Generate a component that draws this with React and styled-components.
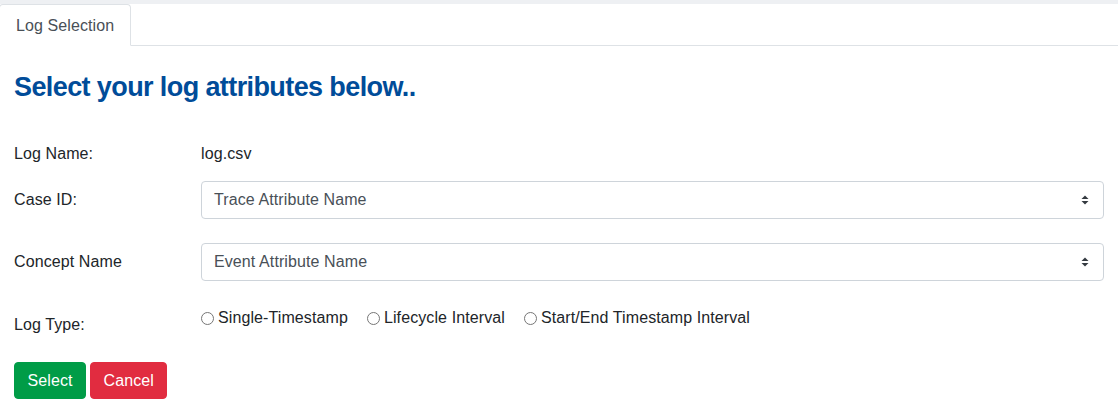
import React, { useState } from 'react';
import styled, { createGlobalStyle } from 'styled-components';

const GlobalStyle = createGlobalStyle`
  body {
    margin: 0;
    background: #fff;
    font-family: "Liberation Sans", Arial, Helvetica, sans-serif;
    font-size: 16px;
    line-height: 24px;
    letter-spacing: 0.1px;
    color: #212529;
  }
`;

const TopStrip = styled.div`
  height: 4px;
  background: #eef0f3;
`;

const TabList = styled.ul`
  display: flex;
  margin: 0;
  padding: 0;
  list-style: none;
  border-bottom: 1px solid #dee2e6;
`;

const Tab = styled.li`
  margin: 0 0 -1px -1px;
  padding: 9px 16px 7px;
  border: 1px solid #dee2e6;
  border-bottom-color: #fff;
  border-radius: 4px 4px 0 0;
  background: #fff;
  color: #495057;
`;

const Content = styled.div`
  padding: 0 14px;
`;

const Heading = styled.h3`
  margin: 25px 0 32px;
  font-size: 27px;
  line-height: 1.2;
  font-weight: 700;
  letter-spacing: -0.6px;
  color: #004c99;
`;

const Row = styled.div`
  display: grid;
  grid-template-columns: 187px 1fr;
  align-items: start;
  margin-bottom: ${({ $gap }) => $gap}px;
`;

const Label = styled.div`
  padding: 7px 0;
  line-height: 24px;
`;

const Value = styled.div`
  padding: 7px 0;
  line-height: 24px;
`;

const SelectBox = styled.div`
  position: relative;
  height: 38px;
  box-sizing: border-box;
  border: 1px solid #ced4da;
  border-radius: 4px;
  padding: 6px 12px;
  color: #495057;
  line-height: 24px;
  background: #fff;
`;

const Arrows = styled.svg`
  position: absolute;
  right: 14px;
  top: 50%;
  width: 8px;
  height: 10px;
  margin-top: -5px;
`;

const RadioGroup = styled.div`
  display: flex;
  gap: 19px;
  line-height: 24px;
`;

const RadioItem = styled.label`
  display: flex;
  align-items: center;
  gap: 4px;
  cursor: pointer;
`;

const RadioInput = styled.input`
  appearance: none;
  margin: 0;
  width: 13px;
  height: 13px;
  border: 1px solid #767676;
  border-radius: 50%;
  background: #fff;
  box-sizing: border-box;

  &:checked {
    border: 4px solid #0075ff;
  }
`;

const Actions = styled.div`
  display: flex;
  gap: 4px;
`;

const Button = styled.button`
  font-family: inherit;
  font-size: 16px;
  letter-spacing: 0.1px;
  line-height: 23px;
  padding: 6px 12.5px;
  border: 1px solid ${({ $color }) => $color};
  border-radius: 4px;
  background: ${({ $color }) => $color};
  color: #fff;
  cursor: pointer;
`;

const Select = ({ text }) => (
  <SelectBox>
    {text}
    <Arrows viewBox="0 0 8 10">
      <path d="M4 0.5 L7.5 4 H0.5 Z" fill="#343a40" />
      <path d="M4 9.5 L7.5 6 H0.5 Z" fill="#343a40" />
    </Arrows>
  </SelectBox>
);

const logTypes = ['Single-Timestamp', 'Lifecycle Interval', 'Start/End Timestamp Interval'];

export default function App() {
  const [logType, setLogType] = useState(null);

  return (
    <>
      <GlobalStyle />
      <TopStrip />
      <TabList>
        <Tab>Log Selection</Tab>
      </TabList>
      <Content>
        <Heading>Select your log attributes below..</Heading>

        <Row $gap={8}>
          <Label>Log Name:</Label>
          <Value>log.csv</Value>
        </Row>

        <Row $gap={24}>
          <Label>Case ID:</Label>
          <Select text="Trace Attribute Name" />
        </Row>

        <Row $gap={25}>
          <Label>Concept Name</Label>
          <Select text="Event Attribute Name" />
        </Row>

        <Row $gap={18}>
          <Label>Log Type:</Label>
          <RadioGroup>
            {logTypes.map((t) => (
              <RadioItem key={t}>
                <RadioInput
                  type="radio"
                  name="logType"
                  checked={logType === t}
                  onChange={() => setLogType(t)}
                />
                {t}
              </RadioItem>
            ))}
          </RadioGroup>
        </Row>

        <Actions>
          <Button $color="#009c47">Select</Button>
          <Button $color="#e12c40">Cancel</Button>
        </Actions>
      </Content>
    </>
  );
}
